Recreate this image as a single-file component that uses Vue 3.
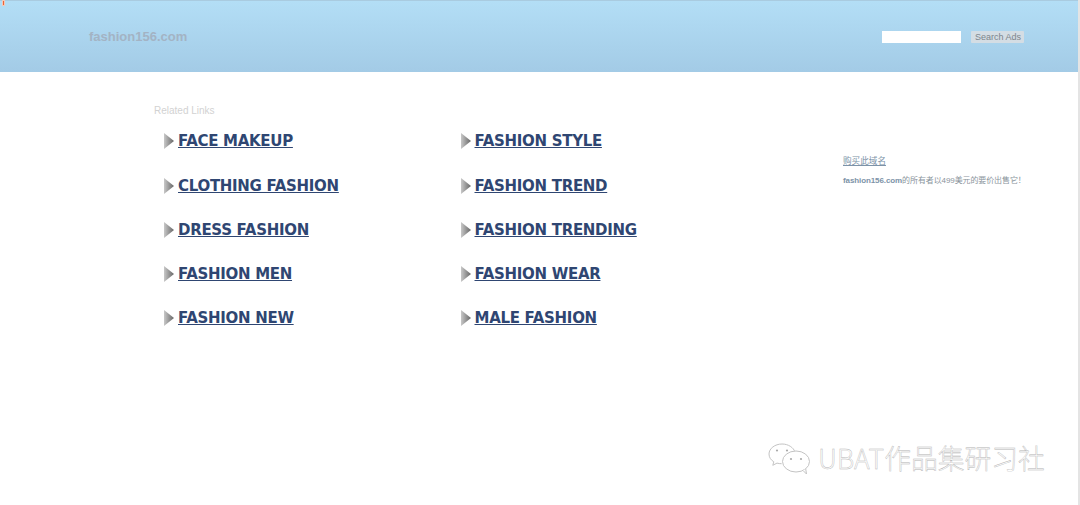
<template>
  <div class="page">
    <span class="marker"></span>
    <header class="top">
      <div class="logo">fashion156.com</div>
      <form class="search" @submit.prevent>
        <input class="box" type="text" />
        <button class="go" type="submit">Search Ads</button>
      </form>
    </header>
    <main class="content">
      <section class="links">
        <div class="title">Related Links</div>
        <div class="grid">
          <div v-for="item in links" :key="item" class="item">
            <svg class="arrow" width="10" height="16" viewBox="0 0 10 16">
              <defs>
                <linearGradient id="arrowFill" x1="0" y1="0" x2="1" y2="0">
                  <stop offset="0" stop-color="#c8c8c8" />
                  <stop offset="1" stop-color="#666" />
                </linearGradient>
              </defs>
              <polygon points="0,0 10,8 0,16" fill="url(#arrowFill)" />
            </svg>
            <a href="#">{{ item }}</a>
          </div>
        </div>
      </section>
      <aside class="side">
        <a href="#" class="buy">购买此域名</a>
        <p class="note"><b>fashion156.com</b>的所有者以499美元的要价出售它！</p>
      </aside>
    </main>
    <div class="watermark">
      <svg class="wechat" width="44" height="34" viewBox="0 0 44 34" fill="#fff" stroke="#c4c4c4" stroke-width="1">
        <path d="M14 3C7 3 1 7.500 1 13c0 3.200 1.800 6 4.800 7.800l-1 3.500 4.200-2.200c1.500.4 3 .6 4.600.6" />
        <path d="M27 11C25.500 6.500 20.300 3 14 3" />
        <ellipse cx="28" cy="20.500" rx="13.500" ry="10.500" />
        <path d="M35 29.500l3.500 3.500-.8-5.200" />
        <circle cx="9" cy="9.500" r="1.100" fill="#aaa" stroke="none" />
        <circle cx="19" cy="9.500" r="1.100" fill="#aaa" stroke="none" />
        <circle cx="23" cy="18" r="1.100" fill="#aaa" stroke="none" />
        <circle cx="33" cy="18" r="1.100" fill="#aaa" stroke="none" />
      </svg>
      <span>UBAT作品集研习社</span>
    </div>
  </div>
</template>

<script setup>
const links = [
  'FACE MAKEUP',
  'FASHION STYLE',
  'CLOTHING FASHION',
  'FASHION TREND',
  'DRESS FASHION',
  'FASHION TRENDING',
  'FASHION MEN',
  'FASHION WEAR',
  'FASHION NEW',
  'MALE FASHION',
];
</script>

<style>
html, body {
  margin: 0;
  background: #fff;
  overflow: hidden;
}
</style>

<style scoped>
.page {
  position: relative;
  width: 1080px;
  height: 505px;
  overflow: hidden;
  background: #fff;
  border-right: 2px solid #e4e4e4;
  box-sizing: border-box;
  font-family: "Liberation Sans", Arial, sans-serif;
}

.marker {
  position: absolute;
  left: 2px;
  top: 0;
  width: 3px;
  height: 6px;
  background: #e8623a;
  border: 1px solid #f3c9b8;
  box-sizing: border-box;
}

.top {
  height: 72px;
  box-sizing: border-box;
  border-top: 1px solid #a9cbe0;
  background: linear-gradient(#b3def6, #a3cbe6);
  display: flex;
  justify-content: space-between;
  align-items: flex-start;
  padding: 0 54px 0 89px;
}

.logo {
  margin-top: 28px;
  font-size: 13px;
  line-height: 16px;
  font-weight: bold;
  color: #a3b3c4;
}

.search {
  display: flex;
  align-items: center;
  gap: 10px;
  margin-top: 30px;
}

.box {
  width: 79px;
  height: 12px;
  padding: 0;
  border: 0;
  background: #fff;
}

.go {
  width: 53px;
  height: 12px;
  padding: 0 0 0 1px;
  border: 0;
  border-radius: 1px;
  background: #d4dde4;
  color: #7c858d;
  font-family: inherit;
  font-size: 9px;
  line-height: 12px;
}

.content {
  display: flex;
  padding-left: 154px;
}

.links {
  width: 689px;
}

.title {
  margin-top: 33px;
  font-size: 10px;
  line-height: 12px;
  color: #d2d2d2;
}

.grid {
  display: grid;
  grid-template-columns: 296.500px 1fr;
  grid-auto-rows: 44.250px;
  margin-top: 2.400px;
  padding-left: 10px;
}

.item {
  display: flex;
  align-items: center;
  gap: 4px;
  height: 44px;
}

.arrow {
  flex: none;
}

.item a {
  font-family: "DejaVu Sans", Verdana, sans-serif;
  font-size: 15px;
  font-weight: bold;
  letter-spacing: -0.300px;
  color: #2f4672;
  text-decoration: underline;
  white-space: nowrap;
}

.side {
  padding-top: 83px;
  font-size: 8px;
  color: #8a949c;
}

.buy {
  display: block;
  font-family: "Liberation Sans", "Noto Sans CJK SC", sans-serif;
  font-size: 8.600px;
  line-height: 12px;
  color: #7d93a8;
  text-decoration: underline;
}

.note {
  margin: 8px 0 0;
  font-family: "Liberation Sans", "Noto Sans CJK SC", sans-serif;
  line-height: 12px;
  letter-spacing: -0.100px;
  white-space: nowrap;
}

.note b {
  color: #7d93a8;
}

.watermark {
  position: absolute;
  left: 768px;
  top: 441px;
  display: flex;
  align-items: center;
  gap: 6px;
  color: #fff;
  font-family: "Noto Sans CJK SC", sans-serif;
  font-weight: 300;
  font-size: 26.800px;
  line-height: 32px;
  -webkit-text-stroke: 0.4px #b4b4b4;
  white-space: nowrap;
}

.wechat {
  flex: none;
}
</style>
